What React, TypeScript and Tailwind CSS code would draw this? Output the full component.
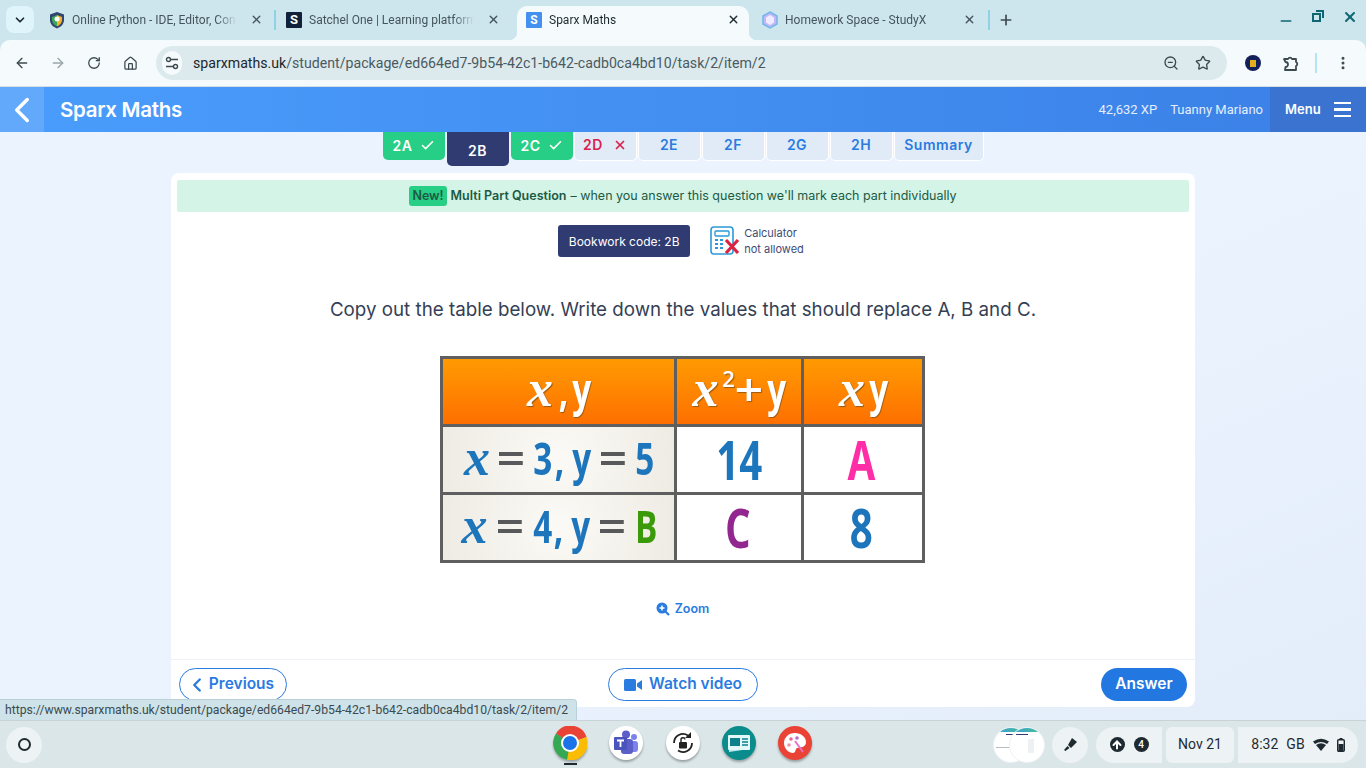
import { ArrowLeft, ArrowRight, Check, ChevronDown, ChevronLeft, EllipsisVertical, House, Minus, Plus, RotateCw, Star, X, ZoomOut, ArrowUp } from "lucide-react";

const roboto = "font-['Roboto',sans-serif]";
const sparx = "font-['Inter',sans-serif]";

const Tab = ({ icon, title, active }: { icon: React.ReactNode; title: string; active?: boolean }) => (
  <div className={`relative flex h-[34px] w-[232px] shrink-0 items-center pb-[7px] pl-[9px] pr-[9px] ${active ? "rounded-t-[10px] bg-[#f5fafd]" : ""}`}>
    {active && <div className="absolute bottom-0 left-[-8px] h-[8px] w-[8px] bg-[radial-gradient(circle_at_0_0,transparent_8px,#f5fafd_8.5px)]" />}
    {active && <div className="absolute bottom-0 right-[-8px] h-[8px] w-[8px] bg-[radial-gradient(circle_at_100%_0,transparent_8px,#f5fafd_8.5px)]" />}
    <div className="flex w-[16px] shrink-0 justify-center">{icon}</div>
    <span className={`ml-[7px] w-[172px] overflow-hidden whitespace-nowrap text-[12px] [mask-image:linear-gradient(to_right,black_84%,transparent_96%)] ${active ? "text-[#1f2a30]" : "text-[#45555c]"}`}>{title}</span>
    <X size={13} strokeWidth={2.5} className={`ml-auto ${active ? "text-[#1f2a30]" : "text-[#45555c]"}`} />
  </div>
);

const StepTab = ({ label, kind, wide }: { label: string; kind: "done" | "active" | "wrong" | "todo"; wide?: boolean }) => {
  if (kind === "done")
    return (
      <div className="flex h-[28px] w-[62px] items-center justify-center gap-[7px] rounded-b-[5px] bg-[#27cf86] pb-[2px] text-[14px] font-semibold tracking-[0.6px] text-white">
        {label}
        <Check size={15} strokeWidth={2.5} />
      </div>
    );
  if (kind === "active")
    return <div className="flex h-[34px] w-[62px] items-center justify-center rounded-b-[5px] bg-[#2f3b71] pt-[2px] text-[14px] font-semibold tracking-[0.6px] text-white">{label}</div>;
  return (
    <div className={`flex h-[29px] items-center justify-center gap-[10px] rounded-b-[5px] border border-t-0 border-white bg-[#e0ebf7] pb-[3px] text-[14px] font-semibold tracking-[0.5px] ${wide ? "w-[90px]" : "w-[63px]"} ${kind === "wrong" ? "text-[#d9234c]" : "text-[#2a7be0]"}`}>
      {label}
      {kind === "wrong" && <X size={14} strokeWidth={3} />}
    </div>
  );
};

// table glyphs: each sits in a fixed box so the condensed text keeps its place
const Tok = ({ className, children }: { className: string; children: React.ReactNode }) => <span className={`flex shrink-0 justify-center ${className}`}>{children}</span>;

const Sans = ({ children }: { children: React.ReactNode }) => (
  <span className="inline-block shrink-0 scale-x-[0.74] font-['Open_Sans',sans-serif] text-[45px] font-bold leading-none">{children}</span>
);

const Eq = ({ children = "=" }: { children?: string }) => (
  <span className="inline-block shrink-0 scale-x-[1.12] font-['Open_Sans',sans-serif] text-[45px] font-semibold leading-none">{children}</span>
);

const Ital = () => <span className="inline-block shrink-0 font-['Liberation_Serif',serif] text-[52px] font-bold italic leading-none">x</span>;

const HeadCell = ({ children }: { children: React.ReactNode }) => (
  <div className="flex items-center justify-center bg-gradient-to-b from-[#ff9a02] to-[#fd6f00] pb-[6px] text-white [text-shadow:1px_1px_1px_#9a5a10]">
    <div className="flex items-baseline">{children}</div>
  </div>
);

const MathCell = ({ children }: { children: React.ReactNode }) => (
  <div className="flex items-center justify-center bg-[radial-gradient(circle,#fbfaf6,#eeebe3)] pb-[4px] text-[#1d75bc]">
    <div className="flex items-baseline">{children}</div>
  </div>
);

const ValueCell = ({ color, children }: { color: string; children: string }) => (
  <div className={`flex items-center justify-center bg-white ${color}`}>
    <span className="inline-block scale-x-[0.76] font-['Open_Sans',sans-serif] text-[53px] font-bold leading-none">{children}</span>
  </div>
);

const TrayPill = ({ children, className }: { children: React.ReactNode; className: string }) => (
  <div className={`flex h-[36px] items-center justify-center bg-[#edf2f4] ${className}`}>{children}</div>
);

const ShelfIcon = ({ children }: { children: React.ReactNode }) => <div className="h-[34px] w-[34px] rounded-full drop-shadow-[0_2px_1px_rgba(0,0,0,0.3)]">{children}</div>;

export default function App() {
  return (
    <div className={`relative flex h-[768px] w-[1366px] flex-col overflow-hidden bg-[#cde5ec] ${roboto}`}>
      {/* Tab strip */}
      <div className="flex h-[40px] items-end">
        <div className="mb-[7px] ml-[6px] flex h-[27px] w-[28px] items-center justify-center rounded-[8px] bg-[#dff5fb]">
          <ChevronDown size={14} strokeWidth={3} className="text-[#1f2a30]" />
        </div>
        <div className="ml-[6px]">
          <Tab
            title="Online Python - IDE, Editor, Con"
            icon={
              <svg width="16" height="18" viewBox="0 0 16 18">
                <path d="M8 1 L15 3.5 V9 C15 13 12 16 8 17.5 C4 16 1 13 1 9 V3.5 Z" fill="#31456e" />
                <path d="M8 4 L13 6 V9 C13 12 11 14 8 15.5 Z" fill="#f3b32d" />
                <path d="M8 4 L3 6 V9 C3 12 5 14 8 15.5 Z" fill="#3ba55c" />
                <circle cx="8" cy="8" r="2.5" fill="#fff" />
              </svg>
            }
          />
        </div>
        <div className="mb-[10px] ml-[2px] h-[20px] w-[2px] bg-[#8fd2e4]" />
        <div className="ml-[1px]">
          <Tab
            title="Satchel One | Learning platform"
            icon={<div className="flex h-[16px] w-[16px] items-center justify-center rounded-[1px] bg-[#12213a] text-[13px] font-bold leading-none text-white">S</div>}
          />
        </div>
        <div className="ml-[8px]">
          <Tab active title="Sparx Maths" icon={<div className="flex h-[16px] w-[16px] items-center justify-center rounded-[1px] bg-[#4390f0] text-[12px] font-bold leading-none text-white">S</div>} />
        </div>
        <div className="ml-[4px]">
          <Tab
            title="Homework Space - StudyX"
            icon={
              <svg width="16" height="18" viewBox="0 0 16 18">
                <path d="M8 1 L15 5 V13 L8 17 L1 13 V5 Z" fill="#c7b6f7" stroke="#6fb8e8" strokeWidth="1.5" />
                <path d="M8 4 L12 6.5 V11.5 L8 14 L4 11.5 V6.5 Z" fill="#f0ecff" />
              </svg>
            }
          />
        </div>
        <div className="mb-[10px] ml-[3px] h-[20px] w-[2px] bg-[#8fd2e4]" />
        <Plus size={16} strokeWidth={2.5} className="mb-[12px] ml-[8px] text-[#3c4a50]" />
        <div className="mb-[15px] ml-auto flex items-center gap-[16px] pr-[8px] text-[#0f6673]">
          <Minus size={16} strokeWidth={2.5} className="translate-y-[4px]" />
          <svg width="16" height="16" viewBox="0 0 16 16" fill="none" stroke="currentColor" strokeWidth="2">
            <rect x="3" y="5" width="7" height="7" />
            <path d="M6 2 H13 V9" />
          </svg>
          <X size={16} strokeWidth={3} />
        </div>
      </div>

      {/* Toolbar */}
      <div className="flex h-[47px] items-center rounded-t-[10px] border-b border-[#d5dee2] bg-[#f5fafd] text-[#3c4a50]">
        <ArrowLeft size={16} strokeWidth={2} className="ml-[14px]" />
        <ArrowRight size={16} strokeWidth={2} className="ml-[20px] text-[#9aa5a9]" />
        <RotateCw size={14} strokeWidth={2.2} className="ml-[21px]" />
        <House size={15} strokeWidth={2} className="ml-[22px]" />
        <div className="ml-[18px] flex h-[34px] w-[1071px] items-center rounded-full bg-[#dceaee] pl-[6px] pr-[16px]">
          <div className="flex h-[24px] w-[20px] items-center justify-center rounded-full bg-[#f5fafd]">
            <svg width="14" height="14" viewBox="0 0 14 14" fill="none" stroke="currentColor" strokeWidth="1.4">
              <circle cx="3.5" cy="3.5" r="2" />
              <path d="M6 3.5 H13 M1 10.5 H8" />
              <circle cx="10.5" cy="10.5" r="2" />
            </svg>
          </div>
          <span className="ml-[11px] pt-[1px] text-[14.15px] text-[#4b5a60]">
            <span className="text-[#1c262b]">sparxmaths.uk</span>/student/package/ed664ed7-9b54-42c1-b642-cadb0ca4bd10/task/2/item/2
          </span>
          <ZoomOut size={16} strokeWidth={2} className="ml-auto" />
          <Star size={16} strokeWidth={2} className="ml-[16px]" />
        </div>
        <div className="ml-[18px] flex h-[16px] w-[16px] items-center justify-center rounded-full bg-[#14205a]">
          <div className="h-[7px] w-[6px] bg-[#e0b020]" />
        </div>
        <svg className="ml-[21px]" width="18" height="18" viewBox="0 0 18 18" fill="none" stroke="currentColor" strokeWidth="1.8" strokeLinejoin="round">
          <path d="M2 5 H6 A2.2 2.2 0 0 1 10 5 H14 V8 A2.2 2.2 0 0 1 14 12 V16 H3 L3.5 13 A2.5 2.5 0 0 0 3.5 8 Z" />
        </svg>
        <div className="ml-[15px] h-[20px] w-[2px] bg-[#b5e4f5]" />
        <EllipsisVertical size={16} strokeWidth={2.5} className="ml-[18px]" />
      </div>

      {/* Sparx header */}
      <div className={`flex h-[45px] items-center bg-gradient-to-r from-[#4a9dfc] to-[#3b80e6] text-white ${sparx}`}>
        <div className="flex h-full w-[44px] items-center justify-center bg-[#62a9fb]">
          <ChevronLeft size={42} strokeWidth={2} />
        </div>
        <div className="ml-[16px] pt-[1px] text-[20.5px] font-semibold tracking-[-0.3px]">Sparx Maths</div>
        <div className={`ml-auto text-[13px] text-[#e4eefc] ${roboto}`}>42,632 XP</div>
        <div className={`ml-[13px] text-[13px] text-[#e4eefc] ${roboto}`}>Tuanny Mariano</div>
        <div className="ml-[7px] flex h-full w-[96px] items-center bg-[#3a73d0] pl-[15px]">
          <span className="text-[13px] font-semibold">Menu</span>
          <div className="ml-[13px] flex w-[17px] flex-col gap-[4px]">
            <div className="h-[2.5px] bg-white" />
            <div className="h-[2.5px] bg-white" />
            <div className="h-[2.5px] bg-white" />
          </div>
        </div>
      </div>

      {/* Page */}
      <div className={`flex h-[588px] flex-col items-center bg-gradient-to-br from-[#ebf3fe] via-[#ebf3fe] to-[#e3edf9] ${sparx}`}>
        <div className="flex h-[34px] items-start justify-center gap-[1px]">
          <StepTab label="2A" kind="done" />
          <div className="ml-[1px]"><StepTab label="2B" kind="active" /></div>
          <div className="ml-[1px]"><StepTab label="2C" kind="done" /></div>
          <StepTab label="2D" kind="wrong" />
          <StepTab label="2E" kind="todo" />
          <StepTab label="2F" kind="todo" />
          <StepTab label="2G" kind="todo" />
          <StepTab label="2H" kind="todo" />
          <StepTab label="Summary" kind="todo" wide />
        </div>

        <div className="mt-[7px] flex h-[534px] w-[1024px] flex-col rounded-[8px] bg-white">
          <div className="mx-[6px] mt-[7px] flex h-[32px] items-center justify-center rounded-[2px] bg-[#d3f4e6] text-[12.5px] text-[#1c5a44]">
            <span className="mr-[4px] rounded-[3px] bg-[#27cf86] px-[3px] py-[1px] font-semibold">New!</span>
            <span className="font-semibold">Multi Part Question</span>
            <span className="ml-[4px]">– when you answer this question we'll mark each part individually</span>
          </div>

          <div className="mt-[13px] flex items-center justify-center pr-[4px]">
            <div className="flex h-[32px] w-[132px] items-center justify-center rounded-[3px] bg-[#2f3b71] pt-[1px] text-[12px] text-white">Bookwork code: 2B</div>
            <svg className="ml-[20px]" width="30" height="30" viewBox="0 0 30 30" fill="none">
              <rect x="1" y="1" width="22" height="27" rx="3" stroke="#2c9ad8" strokeWidth="1.6" />
              <rect x="5" y="5" width="14" height="5" rx="1" stroke="#2c9ad8" strokeWidth="1.4" />
              <path d="M5 14h3M10 14h3M5 18h3M10 18h3M5 22h3M10 22h3" stroke="#2c9ad8" strokeWidth="2" />
              <path d="M16 14 L28 27 M28 14 L16 27" stroke="#dc2340" strokeWidth="3.2" />
            </svg>
            <div className="ml-[4px] text-[11px] leading-[16px] text-[#3e4a75]">
              Calculator
              <br />
              not allowed
            </div>
          </div>

          <div className="mt-[41px] text-center text-[18.75px] leading-[24px] text-[#353f55]">Copy out the table below. Write down the values that should replace A, B and C.</div>

          <div className="ml-[269px] mt-[34px] grid h-[207px] w-[485px] grid-cols-[231px_124px_118px] grid-rows-[65px_65px_65px] gap-[3px] bg-[#5f5f5f] p-[3px]">
            <HeadCell>
              <Tok className="w-[25px]"><Ital /></Tok>
              <Tok className="ml-[7px] w-[7px]"><Sans>,</Sans></Tok>
              <Tok className="ml-[7px] w-[16px]"><Sans>y</Sans></Tok>
            </HeadCell>
            <HeadCell>
              <Tok className="w-[25px]"><Ital /></Tok>
              <Tok className="ml-[5px] w-[11px] -translate-y-[19px]"><span className="inline-block font-['Open_Sans',sans-serif] text-[22px] font-semibold leading-none">2</span></Tok>
              <Tok className="ml-[4px] w-[21px]"><Eq>+</Eq></Tok>
              <Tok className="ml-[10px] w-[16px]"><Sans>y</Sans></Tok>
            </HeadCell>
            <HeadCell>
              <Tok className="w-[25px]"><Ital /></Tok>
              <Tok className="ml-[6px] w-[16px]"><Sans>y</Sans></Tok>
            </HeadCell>

            <MathCell>
              <Tok className="w-[27px]"><Ital /></Tok>
              <Tok className="ml-[7px] w-[27px] text-[#58595b]"><Eq /></Tok>
              <Tok className="ml-[10px] w-[17px]"><Sans>3</Sans></Tok>
              <Tok className="ml-[4px] w-[8px]"><Sans>,</Sans></Tok>
              <Tok className="ml-[10px] w-[17px]"><Sans>y</Sans></Tok>
              <Tok className="ml-[9px] w-[27px] text-[#58595b]"><Eq /></Tok>
              <Tok className="ml-[10px] w-[17px]"><Sans>5</Sans></Tok>
            </MathCell>
            <ValueCell color="text-[#1d75bc]">14</ValueCell>
            <ValueCell color="pr-[3px] text-[#ff2ea6]">A</ValueCell>

            <MathCell>
              <Tok className="w-[27px]"><Ital /></Tok>
              <Tok className="ml-[9px] w-[26px] text-[#58595b]"><Eq /></Tok>
              <Tok className="ml-[11px] w-[17px]"><Sans>4</Sans></Tok>
              <Tok className="ml-[3px] w-[8px]"><Sans>,</Sans></Tok>
              <Tok className="ml-[10px] w-[17px]"><Sans>y</Sans></Tok>
              <Tok className="ml-[9px] w-[27px] text-[#58595b]"><Eq /></Tok>
              <Tok className="ml-[12px] w-[19px] text-[#3a9a0a]"><Sans>B</Sans></Tok>
            </MathCell>
            <ValueCell color="pr-[3px] text-[#92278f]">C</ValueCell>
            <ValueCell color="pr-[4px] text-[#1d75bc]">8</ValueCell>
          </div>

          <div className="mt-[37px] flex items-center justify-center gap-[5px] pr-[1px] text-[12.5px] font-semibold text-[#2a7be0]">
            <svg width="14" height="14" viewBox="0 0 14 14">
              <circle cx="6" cy="6" r="5.5" fill="currentColor" />
              <path d="M9.5 9.5 L13 13" stroke="currentColor" strokeWidth="2.2" />
              <path d="M3.5 6 H8.5 M6 3.5 V8.5" stroke="#fff" strokeWidth="1.5" />
            </svg>
            Zoom
          </div>

          <div className="mt-auto grid h-[48px] grid-cols-[1fr_auto_1fr] items-start border-t border-[#eef1f6] px-[8px] pt-[8px] text-[15.5px] font-semibold">
            <div className="flex h-[33px] w-[108px] items-center justify-center gap-[1px] rounded-full border border-[#2a7be0] pb-[2px] text-[#2a7be0]">
              <ChevronLeft size={22} strokeWidth={2.6} className="ml-[-6px] mt-[2px]" />
              Previous
            </div>
            <div className="flex h-[33px] w-[150px] items-center justify-center gap-[7px] rounded-full border border-[#2a7be0] pb-[2px] text-[#2a7be0]">
              <svg className="mt-[2px]" width="18" height="12" viewBox="0 0 18 12" fill="currentColor">
                <rect x="0" y="0" width="12" height="12" rx="1.5" />
                <path d="M13 4.5 L18 1 V11 L13 7.5 Z" />
              </svg>
              Watch video
            </div>
            <div className="ml-auto flex h-[33px] w-[86px] items-center justify-center rounded-full bg-[#2278e0] pb-[2px] text-white">Answer</div>
          </div>
        </div>
      </div>

      {/* Shelf */}
      <div className="relative flex h-[48px] items-center border-t border-[#c9d2d6] bg-[#dbe6e8]">
        <div className="ml-[6px] flex h-[36px] w-[36px] items-center justify-center rounded-full bg-[#edf2f4]">
          <div className="h-[13px] w-[13px] rounded-full border-[2px] border-[#1f2a30]" />
        </div>

        <div className="absolute left-[553px] top-[5px] flex items-center gap-[22.25px]">
          <div className="relative">
            <ShelfIcon>
              <svg viewBox="0 0 34 34" width="34" height="34">
                <path d="M17 17 L3 7.5 A17 17 0 0 1 33.5 11 Z" fill="#ea4335" />
                <path d="M17 17 L33.5 11 A17 17 0 0 1 14 33.7 Z" fill="#fbbc04" />
                <path d="M17 17 L14 33.7 A17 17 0 0 1 3 7.5 Z" fill="#34a853" />
                <circle cx="17" cy="17" r="9" fill="#fff" />
                <circle cx="17" cy="17" r="7" fill="#1a73e8" />
              </svg>
            </ShelfIcon>
            <div className="absolute left-[11px] top-[37px] h-[2px] w-[13px] bg-[#1f2a30]" />
          </div>
          <ShelfIcon>
            <svg viewBox="0 0 34 34" width="34" height="34">
              <circle cx="17" cy="17" r="17" fill="#fff" />
              <circle cx="25" cy="11" r="3" fill="#7b83eb" />
              <circle cx="17" cy="8.5" r="4" fill="#5b5fc7" />
              <rect x="21" y="15" width="8" height="11" rx="3" fill="#7b83eb" />
              <rect x="12" y="13" width="12" height="15" rx="3" fill="#5b5fc7" />
              <rect x="5" y="11" width="13" height="13" rx="1" fill="#4b53bc" />
              <path d="M8 14.5h7M11.5 14.5v6.5" stroke="#fff" strokeWidth="1.8" />
            </svg>
          </ShelfIcon>
          <ShelfIcon>
            <svg viewBox="0 0 34 34" width="34" height="34">
              <circle cx="17" cy="17" r="17" fill="#fff" />
              <path d="M8 17 A9 9 0 0 1 22 9.5 M26 17 A9 9 0 0 1 12 24.5" fill="none" stroke="#222" strokeWidth="1.8" />
              <path d="M25 6 V12 H19" fill="#222" />
              <rect x="13" y="16" width="8" height="6.5" rx="1" fill="#222" />
              <path d="M15 16v-2a2 2 0 0 1 4 -0.5" fill="none" stroke="#222" strokeWidth="1.4" />
            </svg>
          </ShelfIcon>
          <ShelfIcon>
            <svg viewBox="0 0 34 34" width="34" height="34">
              <circle cx="17" cy="17" r="17" fill="#0b8c8c" />
              <path d="M7 12 L27 9 V23 L7 26 Z" fill="#bfe6ee" />
              <rect x="6" y="9" width="22" height="15" rx="1" fill="#e3f6f8" />
              <rect x="8" y="12" width="10" height="8" fill="#0b7f8c" />
              <path d="M20 13h6M20 16h6M20 19h6" stroke="#0b7f8c" strokeWidth="1.6" />
            </svg>
          </ShelfIcon>
          <ShelfIcon>
            <svg viewBox="0 0 34 34" width="34" height="34">
              <circle cx="17" cy="17" r="17" fill="#ea4335" />
              <path d="M17 7 C10 7 6 12 6 17 C6 23 11 27 15 27 C18 27 17 23 19 22 C22 21 28 22 28 16 C28 11 23 7 17 7 Z" fill="#fff" />
              <circle cx="13" cy="13" r="1.8" fill="#f06292" />
              <circle cx="19" cy="12" r="1.8" fill="#ba68c8" />
              <circle cx="11" cy="19" r="1.8" fill="#f48fb1" />
              <path d="M17 15 L25 26" stroke="#e573c8" strokeWidth="2" />
            </svg>
          </ShelfIcon>
        </div>

        <div className="ml-auto flex items-center pr-[8px]">
          <div className="relative mr-[7px] h-[36px] w-[52px]">
            <div className="absolute left-0 top-0 h-[36px] w-[36px] overflow-hidden rounded-full border border-[#edf2f4] bg-white">
              <div className="h-[4px] bg-gradient-to-r from-[#3b9ad8] to-[#4ec08a]" />
              <div className="ml-[12px] mt-[2px] h-[1px] w-[12px] bg-[#2f3b71]" />
              <div className="ml-[2px] mt-[12px] h-[1px] w-[30px] bg-[#b5bdc1]" />
            </div>
            <div className="absolute left-[16px] top-0 h-[36px] w-[36px] overflow-hidden rounded-full border border-[#edf2f4] bg-white">
              <div className="h-[4px] bg-gradient-to-r from-[#3b9ad8] to-[#4ec08a]" />
              <div className="ml-[6px] mt-[2px] h-[1px] w-[12px] bg-[#2f3b71]" />
              <div className="ml-[18px] mt-[4px] h-[14px] w-[6px] bg-[#eef1f3]" />
            </div>
          </div>
          <TrayPill className="w-[36px] rounded-full">
            <svg width="15" height="15" viewBox="0 0 15 15" fill="#1f2a30">
              <path d="M9 1 L14 5 L8 11 L5 8 Z" />
              <path d="M4.5 9 L6.5 11 L2.5 14 L1 13 Z" />
            </svg>
          </TrayPill>
          <TrayPill className="ml-[8px] w-[66px] gap-[9px] rounded-l-full rounded-r-[6px]">
            <div className="flex h-[15px] w-[15px] items-center justify-center rounded-full bg-[#1f2a30]">
              <ArrowUp size={12} strokeWidth={4} className="text-white" />
            </div>
            <div className="flex h-[15px] w-[15px] items-center justify-center rounded-full bg-[#1f2a30] text-[10px] font-medium text-white">4</div>
          </TrayPill>
          <TrayPill className="ml-[4px] w-[68px] rounded-[6px] text-[14px] text-[#1f2a30]">Nov 21</TrayPill>
          <TrayPill className="ml-[4px] w-[120px] gap-[8px] rounded-l-[6px] rounded-r-full text-[14px] text-[#1f2a30]">
            <span>8:32</span>
            <span>GB</span>
            <svg width="16" height="13" viewBox="0 0 16 13" fill="#1f2a30">
              <path d="M0 3.5 Q8 -2 16 3.5 L14 6 Q8 2 2 6 Z" />
              <path d="M3 7 Q8 3.5 13 7 L8 13 Z" />
            </svg>
            <svg width="8" height="14" viewBox="0 0 8 14">
              <rect x="2.5" y="0" width="3" height="2" fill="#1f2a30" />
              <rect x="0.7" y="1.7" width="6.6" height="11.6" rx="1" fill="none" stroke="#1f2a30" strokeWidth="1.4" />
              <rect x="1.5" y="6" width="5" height="7" fill="#1f2a30" />
            </svg>
          </TrayPill>
        </div>
      </div>

      {/* Link preview over the page */}
      <div className="absolute left-0 top-[699px] h-[21px] w-[577px] rounded-tr-[4px] border-r border-t border-[#bcd0d7] bg-[#cde3e9] pl-[5px] text-[12.2px] leading-[21px] text-[#3c4a50]">
        https://www.sparxmaths.uk/student/package/ed664ed7-9b54-42c1-b642-cadb0ca4bd10/task/2/item/2
      </div>
    </div>
  );
}
